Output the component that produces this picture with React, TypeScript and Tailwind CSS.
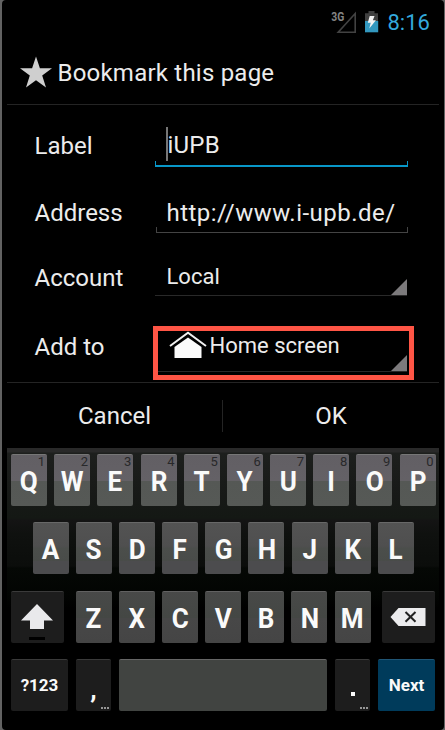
import React from "react";

const letterKey =
  "relative flex h-[52px] w-[36px] shrink-0 items-center justify-center rounded-[2px] border-t text-[28px] leading-none font-bold text-[#fafafa]";
const darkKey =
  "relative flex h-[52px] shrink-0 items-center justify-center rounded-[2px] border-t border-[#3a3a3a] bg-[#1d1d1d] text-[#fafafa]";

function Corner() {
  return (
    <svg className="h-4 w-4" viewBox="0 0 16 16">
      <path d="M16 0V16H0Z" fill="#7c7a7c" />
    </svg>
  );
}

function StatusBar() {
  return (
    <div className="flex h-[46px] shrink-0 pl-[329px]">
      <svg className="mt-[9px] h-[26px] w-[50px] shrink-0" viewBox="331 9 50 26">
        <text x="331.3" y="20.6" fontSize="12" fontWeight="700" fill="#858585" textLength="13" lengthAdjust="spacingAndGlyphs" fontFamily="Roboto, sans-serif">3G</text>
        <path d="M355.2 13.5V32.2H338.2Z" fill="none" stroke="#424242" strokeWidth="1.6" />
        <path d="M368.5 11h6v2.3h3.5V21h-13v-7.700h3.500z" fill="#404040" />
        <rect x="365" y="21" width="13.200" height="11.300" fill="#3398bf" />
        <path d="M369.700 16h4.800l-1.600 4.300h3l-6.600 8.200 1.400-5.700h-2.900z" fill="#f4f4f4" />
      </svg>
      <span className="ml-[6.500px] mt-[12px] text-[22px] leading-[22px] text-[#33a9dc]">8:16</span>
    </div>
  );
}

function FormRow({ label, className, children }: { label: string; className: string; children: React.ReactNode }) {
  return (
    <div className={"flex shrink-0 pl-[27px] " + className}>
      <span className="w-[121px] shrink-0 pl-[0.500px] text-[24px] leading-[28px]">{label}</span>
      {children}
    </div>
  );
}

function Letter({ children }: { children: string }) {
  return <span className="inline-block scale-x-[0.93]">{children}</span>;
}

function Digits({ letter, n }: { letter: string; n: string }) {
  return (
    <div className={letterKey + " border-[#777] bg-[linear-gradient(#625f64_0%,#646166_50%,#555855_50%,#565956_100%)] pt-[3px]"}>
      <Letter>{letter}</Letter>
      <span className="absolute right-[2px] top-[0px] text-[13px] leading-[13px] font-normal text-[#28282a]">{n}</span>
    </div>
  );
}

function Keyboard() {
  const digits = "1234567890";
  return (
    <div className="flex h-[282px] w-[432px] shrink-0 flex-col bg-[linear-gradient(#292929_0px,#292929_4px,#1d1f1d_5px,#171917_48px,#141814_70px,#141414_72px,#0f110f_86px,#0b0d0b_118px,#050805_120px,#020402_148px,#000_160px)]">
      <div className="ml-[4px] mt-[6px] flex gap-[7.180px]">
        {"QWERTYUIOP".split("").map((l, i) => (
          <Digits key={l} letter={l} n={digits[i]} />
        ))}
      </div>
      <div className="ml-[25.600px] mt-4 flex gap-[7.180px]">
        {"ASDFGHJKL".split("").map((l) => (
          <div key={l} className={letterKey + " border-[#686868] bg-[linear-gradient(#535353_0%,#4f4f4f_45%,#4b4e4b_50%,#494c49_74%,#4c4c4e_75%)] pt-[3px]"}>
            <Letter>{l}</Letter>
          </div>
        ))}
      </div>
      <div className="ml-[4px] mt-[16.500px] flex">
        <div className={darkKey + " w-[53px]"}>
          <svg className="h-[38px] w-[34px] -translate-x-[1px]" viewBox="0 0 34 38">
            <path d="M17 6L33 22.500H24V31H10V22.500H1Z" fill="#e9e9eb" />
          </svg>
          <span className="absolute bottom-[3px] left-[18px] h-[3px] w-[16px] bg-black" />
        </div>
        <div className="ml-[11.600px] flex gap-[7.180px]">
          {"ZXCVBNM".split("").map((l) => (
            <div key={l} className={letterKey + " border-[#616161] bg-[linear-gradient(#484948_0%,#444744_50%,#474747_51%,#454545_100%)] pt-[3px]"}>
              <Letter>{l}</Letter>
            </div>
          ))}
        </div>
        <div className={darkKey + " ml-[11px] w-[53px]"}>
          <svg className="h-[18px] w-[36px]" viewBox="0 0 36 18">
            <path d="M0.500 9L8.500 0H35.500V18H8.500Z" fill="#ececee" />
            <path d="M15.500 4L25.500 13.800M25.500 4L15.500 13.800" stroke="#222" strokeWidth="2" />
          </svg>
        </div>
      </div>
      <div className="ml-[4px] mt-[16.500px] flex">
        <div className={darkKey + " w-[57px] text-[17px] font-bold"}>?123</div>
        <div className={darkKey + " ml-[8px] w-[35px] pt-[8px] text-[26px] font-bold"}>
          ,
          <Dots />
        </div>
        <div className="ml-[8px] h-[52px] w-[208px] rounded-[2px] border-t border-[#666] bg-[#414441]" />
        <div className={darkKey + " ml-[8px] w-[35px]"}>
          <span className="mt-[17px] h-[4px] w-[4px] bg-[#fafafa]" />
          <Dots />
        </div>
        <div className="ml-[8px] flex h-[52px] w-[57px] items-center justify-center rounded-[2px] border-t border-[#205575] bg-[#003b5b] text-[17px] font-bold text-[#fafafa]">Next</div>
      </div>
    </div>
  );
}

function Dots() {
  return (
    <span className="absolute bottom-[2px] right-[2px] flex gap-px">
      <i className="h-[2px] w-[2px] bg-[#969696]" />
      <i className="h-[2px] w-[2px] bg-[#969696]" />
      <i className="h-[2px] w-[2px] bg-[#969696]" />
    </span>
  );
}

export default function App() {
  return (
    <div className="h-[730px] w-[445px] overflow-hidden bg-[#626262] pl-[2px] pr-px font-['Roboto',sans-serif] whitespace-nowrap text-[#ececec]">
      <div className="flex h-[730px] flex-col rounded-[4px] bg-black">
        <StatusBar />
        <div className="ml-[5px] flex h-[59px] w-[432px] shrink-0 items-center border-b border-[#242424] pl-[12px]">
          <svg className="mt-[-6px] h-[32px] w-[34px]" viewBox="0 0 34 32">
            <path d="M17 0.500L20.900 12.300H33L23.200 19.600L27 31.500L17 24.200L7 31.500L10.800 19.600L1 12.300H13.100Z" fill="#cfcfcf" />
          </svg>
          <span className="mt-[-5px] ml-[4.500px] text-[24px] leading-[28px] tracking-[0.220px]">Bookmark this page</span>
        </div>

        <div className="ml-[5px] flex h-[278px] w-[432px] shrink-0 flex-col border-b border-[#242424]">
          <FormRow label="Label" className="mt-[27px] h-[36px]">
            <div className="flex h-[35px] w-[253px] flex-col">
              <div className="flex h-[29px]">
                <i className="ml-[11px] mt-[-5px] h-[34px] w-[1.500px] bg-[#777]" />
                <span className="mt-[-1px] text-[24px] leading-[28px] tracking-[0.200px]">iUPB</span>
              </div>
              <div className="h-[6px] shrink-0 border-x border-b-2 border-[#0897c8]" />
            </div>
          </FormRow>
          <FormRow label="Address" className="mt-[31px] h-[35px]">
            <div className="ml-[0.500px] flex h-[34px] w-[252px] flex-col">
              <span className="ml-[11px] h-[28px] text-[24px] leading-[28px] tracking-[0.480px]">http://www.i-upb.de/</span>
              <div className="h-[6px] shrink-0 border-x border-b border-[#444]" />
            </div>
          </FormRow>
          <FormRow label="Account" className="mt-[30px] h-[35px]">
            <div className="flex h-[32px] w-[252px] items-end justify-between border-b border-[#292929] pl-[11.500px]">
              <span className="mb-[5px] text-[22px] leading-[26px]">Local</span>
              <Corner />
            </div>
          </FormRow>
          <FormRow label="Add to" className="relative mt-[34px] h-[39px]">
            <div className="flex h-[39px] w-[252px] items-end justify-between border-b border-[#292929] pl-[14px]">
              <div className="mb-[12px] flex">
                <svg className="h-[27px] w-[38px]" viewBox="0 0 38 27">
                  <path d="M1 15L19 1.700L37 15" fill="none" stroke="#f0f0f0" strokeWidth="2" />
                  <path d="M19 6.500L32.500 16V27H5.500V16Z" fill="#fafafa" />
                </svg>
                <span className="mt-[2px] ml-[2.500px] text-[22px] leading-[26px]">Home screen</span>
              </div>
              <Corner />
            </div>
            <div className="absolute left-[146px] top-[-7px] h-[54px] w-[261px] border-[5px] border-[#ff5545]" />
          </FormRow>
        </div>

        <div className="ml-[5px] flex h-[65px] w-[432px] shrink-0 items-center text-[24px] leading-[28px]">
          <span className="w-[215px] text-center">Cancel</span>
          <i className="h-[32px] w-px bg-[#242424]" />
          <span className="w-[216px] text-center">OK</span>
        </div>
        <div className="ml-[5px]">
          <Keyboard />
        </div>
      </div>
    </div>
  );
}
